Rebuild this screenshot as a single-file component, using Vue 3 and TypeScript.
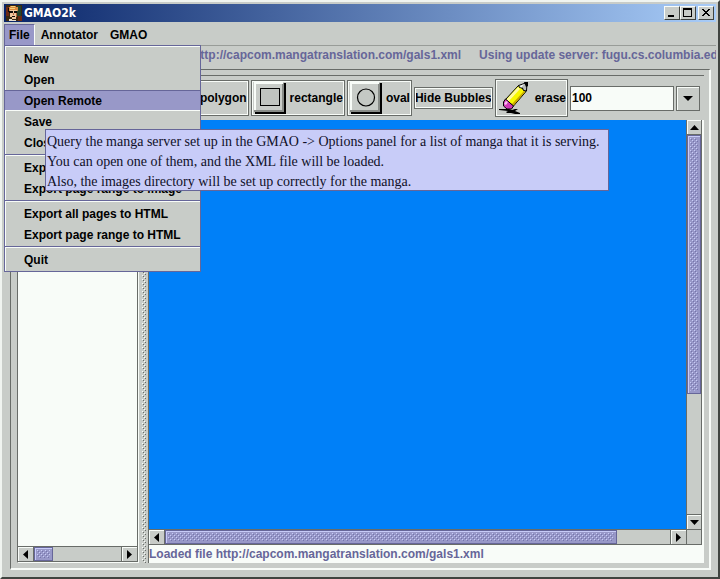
<script setup lang="ts">
import { ref } from 'vue'

interface MenuEntry {
  label: string
  selected?: boolean
}

const menus = ['File', 'Annotator', 'GMAO']
const groups: MenuEntry[][] = [
  [
    { label: 'New' },
    { label: 'Open' },
    { label: 'Open Remote', selected: true },
    { label: 'Save' },
    { label: 'Close' },
  ],
  [{ label: 'Export all pages to image' }, { label: 'Export page range to image' }],
  [{ label: 'Export all pages to HTML' }, { label: 'Export page range to HTML' }],
  [{ label: 'Quit' }],
]
const size = ref('100')
</script>

<template>
  <div class="window">
    <svg class="defs" width="0" height="0" aria-hidden="true">
      <defs>
        <pattern id="bumps" width="4" height="4" patternUnits="userSpaceOnUse">
          <path fill="#c8ccf8" d="M0 0h1v1H0zM2 2h1v1H2z" />
          <path fill="#7474ac" d="M1 1h1v1H1zM3 3h1v1H3z" />
        </pattern>
        <pattern id="grip" width="4" height="4" patternUnits="userSpaceOnUse">
          <path fill="#f8fcf8" d="M0 0h1v1H0zM2 2h1v1H2z" />
          <path fill="#686c68" d="M1 1h1v1H1zM3 3h1v1H3z" />
        </pattern>
      </defs>
    </svg>

    <header class="title">
      <svg class="avatar" width="16" height="16" viewBox="0 0 16 16" shape-rendering="crispEdges" aria-hidden="true">
        <path fill="#3a2a10" d="M0 0h16v16H0z" />
        <path fill="#24452c" d="M11 1h4v10h-4z" />
        <path fill="#6d2a12" d="M0 2h3v9H0zM12 11h4v5h-4z" />
        <path fill="#d98a3c" d="M4 1h6v1h2v4h-1V5H4v1H3V2h1z" />
        <path fill="#f4d27a" d="M5 1h4v1H5zM4 3h5v1H4z" />
        <path fill="#f0c8a0" d="M4 5h7v7h-1v2H6v-2H4z" />
        <path fill="#100c08" d="M3 6h4v2H3zM8 6h3v2H8zM6 11h3v1H6zM2 3h1v4H2z" />
        <path fill="#b86840" d="M10 8h1v4h-1zM7 8h1v2H7z" />
        <path fill="#e8e0d0" d="M3 14h3v2H3zM6 15h4v1H6z" />
      </svg>
      <h1>GMAO2k</h1>
      <button class="wb" type="button" aria-label="Minimize">
        <svg width="12" height="10" viewBox="0 0 12 10"><path d="M2 7h6v2H2z" /></svg>
      </button>
      <button class="wb" type="button" aria-label="Maximize">
        <svg width="12" height="10" viewBox="0 0 12 10"><path fill-rule="evenodd" d="M1 0h9v9H1zM2 2v6h7V2z" /></svg>
      </button>
      <button class="wb close" type="button" aria-label="Close window">
        <svg width="12" height="10" viewBox="0 0 12 10" shape-rendering="crispEdges">
          <path d="M2 1h2v1h1v1h2V2h1V1h2v1H9v1H8v1H7v1h1v1h1v1h1v1H8V7H7V6H5v1H4v1H2V7h1V6h1V5h1V4H4V3H3V2H2z" />
        </svg>
      </button>
    </header>

    <nav class="menubar">
      <button v-for="(m, i) in menus" :key="m" type="button" class="menu" :class="{ open: i === 0 }">{{ m }}</button>
      <div class="dropdown" role="menu">
        <div v-for="(g, i) in groups" :key="i" class="group">
          <button v-for="e in g" :key="e.label" type="button" role="menuitem" class="item" :class="{ selected: e.selected }">{{ e.label }}</button>
        </div>
      </div>
      <p class="tip" role="tooltip">
        Query the manga server set up in the GMAO -&gt; Options panel for a list of manga that it is serving.<br />
        You can open one of them, and the XML file will be loaded.<br />
        Also, the images directory will be set up correctly for the manga.
      </p>
    </nav>

    <div class="info">
      <span>http://capcom.mangatranslation.com/gals1.xml</span>
      <span>Using update server: fugu.cs.columbia.edu</span>
    </div>

    <main class="split">
      <section class="pages">
        <div class="list"></div>
        <div class="hbar">
          <button type="button" class="arrow" aria-label="Scroll left"><svg width="5" height="9" viewBox="0 0 10 18"><path d="M10 0v18L0 9z" /></svg></button>
          <div class="thumb small"><svg width="100%" height="100%"><rect width="100%" height="100%" fill="url(#bumps)" /></svg></div>
          <div class="track"></div>
          <button type="button" class="arrow" aria-label="Scroll right"><svg width="5" height="9" viewBox="0 0 10 18"><path d="M0 0v18L10 9z" /></svg></button>
        </div>
      </section>

      <div class="divider"><svg width="4" height="100%"><rect width="4" height="100%" fill="url(#grip)" /></svg></div>

      <section class="editor">
        <div class="toolbar">
          <button type="button" class="tool">
            <svg width="34" height="32" viewBox="0 0 34 32" aria-hidden="true">
              <path fill="#000" d="M2 1h31v31H2z" /><path fill="#888c88" d="M1 1h30v29H1z" /><path fill="#f8fcf8" d="M1 0h29v2H3v26H1z" /><path fill="#c8ccc8" d="M3 2h26v26H3z" />
              <path fill="none" stroke="#000" d="M8 10l8-4 10 7-4 11H10z" />
            </svg>polygon
          </button>
          <button type="button" class="tool">
            <svg width="34" height="32" viewBox="0 0 34 32" aria-hidden="true">
              <path fill="#000" d="M2 1h31v31H2z" /><path fill="#888c88" d="M1 1h30v29H1z" /><path fill="#f8fcf8" d="M1 0h29v2H3v26H1z" /><path fill="#c8ccc8" d="M3 2h26v26H3z" />
              <rect x="7.5" y="6.5" width="19" height="17" fill="#c0c4c0" stroke="#000" />
            </svg>rectangle
          </button>
          <button type="button" class="tool">
            <svg width="34" height="32" viewBox="0 0 34 32" aria-hidden="true">
              <path fill="#000" d="M2 1h31v31H2z" /><path fill="#888c88" d="M1 1h30v29H1z" /><path fill="#f8fcf8" d="M1 0h29v2H3v26H1z" /><path fill="#c8ccc8" d="M3 2h26v26H3z" />
              <circle cx="17" cy="15.5" r="8.5" fill="#c4c8c4" stroke="#000" stroke-width="1.2" />
            </svg>oval
          </button>
          <button type="button" class="tool plain">Hide Bubbles</button>
          <button type="button" class="tool">
            <svg width="35" height="34" viewBox="-1 0 35 34" aria-hidden="true">
              <path fill="#000" d="M1 28h10l3 1 3-1h3l-3 2 5 2v1h-5l-4-1-4 0-1-1 2-1-9-1z" />
              <path fill="#f8f800" stroke="#000" d="M20.500 4.500L28 10.500 15.500 25 7.500 18.500z" />
              <path fill="#fffca0" d="M20 6l2 2L10 21l-2-2z" />
              <path fill="#c8a800" d="M26 10l1 1-11 13-2-1z" />
              <path fill="#d038b8" stroke="#000" d="M7.500 18L15.500 25l-2 3H9l-3.500-3v-4z" />
              <path fill="#f8c0f0" d="M8 20l2 1-2 3-2-1z" />
              <path fill="#b8bcb8" stroke="#000" d="M20.500 4.500l8.500-3-.5 8.500-3-.5-1-2.500-3-.5z" />
              <path fill="#f8fcf8" d="M22 5l4-2-3 4z" /><path d="M26 1h4v4l-2 1z" />
            </svg>erase
          </button>
          <div class="combo">
            <input v-model="size" type="text" aria-label="Brush size" />
            <button type="button" aria-label="Choose size"><svg width="10" height="5" viewBox="0 0 10 5"><path d="M0 0h10L5 5z" /></svg></button>
          </div>
        </div>
        <div class="canvas"></div>
        <div class="vbar">
          <button type="button" class="arrow" aria-label="Scroll up"><svg width="9" height="5" viewBox="0 0 18 10"><path d="M0 10h18L9 0z" /></svg></button>
          <div class="thumb"><svg width="100%" height="100%"><rect width="100%" height="100%" fill="url(#bumps)" /></svg></div>
          <div class="track"></div>
          <button type="button" class="arrow" aria-label="Scroll down"><svg width="9" height="5" viewBox="0 0 18 10"><path d="M0 0h18L9 10z" /></svg></button>
        </div>
        <div class="hbar">
          <button type="button" class="arrow" aria-label="Scroll left"><svg width="5" height="9" viewBox="0 0 10 18"><path d="M10 0v18L0 9z" /></svg></button>
          <div class="thumb wide"><svg width="100%" height="100%"><rect width="100%" height="100%" fill="url(#bumps)" /></svg></div>
          <div class="track"></div>
          <button type="button" class="arrow" aria-label="Scroll right"><svg width="5" height="9" viewBox="0 0 10 18"><path d="M0 0v18L10 9z" /></svg></button>
        </div>
        <div class="corner"></div>
        <output class="status">Loaded file http://capcom.mangatranslation.com/gals1.xml</output>
      </section>
    </main>
  </div>
</template>

<style>
body {
  margin: 0;
}
</style>

<style scoped>
* {
  box-sizing: border-box;
}
.window {
  display: flex;
  flex-direction: column;
  height: 100vh;
  padding: 2px;
  border: 2px solid #404440;
  border-top-color: #f0f4f0;
  border-left-color: #f0f4f0;
  background: #c8ccc8;
  color: #000;
  font: bold 12px/16px "Liberation Sans", Arial, sans-serif;
  overflow: hidden;
}
.defs {
  position: absolute;
}
button,
input {
  margin: 0;
  padding: 0;
  border: 0;
  border-radius: 0;
  background: #c8ccc8;
  color: inherit;
  font: inherit;
}
svg {
  display: block;
  flex: none;
}
.title {
  display: flex;
  align-items: center;
  height: 18px;
  flex: none;
  padding: 0 2px;
  background: linear-gradient(90deg, #082468, #a8ccf8);
}
.title h1 {
  flex: 1;
  margin: 0;
  padding-left: 2px;
  color: #fff;
  font: bold 12px/16px "DejaVu Sans Condensed", "DejaVu Sans", sans-serif;
}
.wb {
  width: 16px;
  height: 14px;
  padding: 1px;
  border: 1px solid #404440;
  border-top-color: #f8fcf8;
  border-left-color: #f8fcf8;
}
.close {
  margin-left: 2px;
}
.menubar {
  position: relative;
  z-index: 2;
  display: flex;
  flex: none;
  height: 24px;
  padding-top: 2px;
  border-bottom: 1px solid #989c98;
}
.menu {
  padding: 0 5px;
  border: 1px solid transparent;
  border-bottom: 0;
}
.menu.open {
  padding: 0 4px;
  background: #9898c8;
  border-color: #666699;
  border-right-color: #f8fcf8;
}
.dropdown {
  position: absolute;
  top: 23px;
  left: 0;
  width: 197px;
  padding: 2px 0 1px;
  border: 1px solid #666699;
  background: #c8ccc8;
  box-shadow: inset 1px 1px #f8fcf8;
}
.group + .group {
  margin-top: 1px;
  padding-top: 2px;
  border-top: 1px solid #666699;
  box-shadow: inset 0 1px #f8fcf8;
}
.item {
  display: block;
  width: 100%;
  height: 21px;
  padding: 0 19px;
  border: 1px solid transparent;
  border-width: 1px 0;
  background: none;
  text-align: left;
  white-space: nowrap;
}
.item.selected {
  background: #9898c8;
  border-top-color: #666699;
  border-bottom-color: #f8fcf8;
}
.tip {
  position: absolute;
  top: 107px;
  left: 41px;
  margin: 0;
  padding: 2px 4px 0 1px;
  height: 62px;
  width: 564px;
  border: 1px solid #666699;
  background: #c8ccf8;
  color: #101028;
  font: 14px/20px "Liberation Serif", "Times New Roman", serif;
  white-space: nowrap;
}
.info {
  display: flex;
  flex: none;
  gap: 18px;
  height: 23px;
  padding: 1px 0 0 189px;
  color: #666699;
  white-space: nowrap;
  overflow: hidden;
}
.split {
  display: flex;
  flex: 1;
  min-height: 0;
  margin: 0 5px 5px 6px;
  padding: 5px 5px 5px 6px;
  border: 1px solid #686c68;
  border-right: 2px solid #f8fcf8;
  border-bottom: 2px solid #f8fcf8;
}
.pages {
  display: flex;
  flex-direction: column;
  width: 122px;
  border: 1px solid #686c68;
  border-right-color: #f8fcf8;
  border-bottom-color: #f8fcf8;
  background: #f8fcf8;
}
.list {
  flex: 1;
  border-right: 1px solid #686c68;
}
.divider {
  display: flex;
  justify-content: center;
  width: 9px;
}
.editor {
  display: grid;
  flex: 1;
  min-width: 0;
  grid-template: 44px 1fr 16px 18px / 1fr 16px;
  padding-right: 2px;
  border: 1px solid #686c68;
  border-right: 0;
  border-bottom: 0;
  background: #f8fcf8;
}
.toolbar {
  grid-column: 1 / -1;
  display: flex;
  align-items: center;
  justify-content: flex-end;
  gap: 2px;
  min-width: 0;
  margin-right: -2px;
  padding-right: 4px;
  background: #c8ccc8;
  overflow: hidden;
}
.tool {
  display: flex;
  flex: none;
  align-items: center;
  gap: 3px;
  padding: 1px;
  border: 1px solid #686c68;
  outline: 1px solid #f8fcf8;
  outline-offset: -2px;
  white-space: nowrap;
}
.plain {
  padding: 2px 0;
}
.combo {
  display: flex;
  flex: none;
  gap: 2px;
  height: 25px;
}
.combo input {
  width: 104px;
  padding: 0 1px;
  border: 1px solid #686c68;
  background: #f8fcf8;
}
.combo button {
  display: grid;
  place-items: center;
  width: 24px;
  border: 1px solid #686c68;
  box-shadow: inset 1px 1px #f8fcf8;
}
.canvas {
  background: #0080f8;
}
.vbar,
.hbar {
  display: flex;
  min-width: 0;
  min-height: 0;
  background: #c8ccc8;
}
.vbar {
  flex-direction: column;
  border-left: 1px solid #686c68;
  border-right: 1px solid #686c68;
}
.hbar {
  height: 16px;
  border-top: 1px solid #686c68;
  border-bottom: 1px solid #686c68;
}
.pages .hbar {
  border-right: 1px solid #686c68;
}
.arrow {
  display: grid;
  place-items: center;
  flex: none;
  width: 16px;
  border-right: 1px solid #686c68;
  box-shadow: inset 1px 1px #f8fcf8;
}
.track + .arrow {
  border-left: 1px solid #686c68;
}
.hbar .track + .arrow {
  border-right: 0;
}
.vbar .arrow {
  width: 100%;
  height: 15px;
  border: 0;
  border-bottom: 1px solid #686c68;
}
.vbar .track + .arrow {
  border-top: 1px solid #686c68;
  border-bottom: 0;
}
.thumb {
  flex: 256 1 0;
  min-width: 0;
  min-height: 0;
  padding: 2px;
  border: 1px solid #666699;
  background: #9898c8;
  box-shadow: inset 1px 1px #c8ccf8;
}
.thumb.small {
  flex: 0 0 19px;
}
.thumb.wide {
  flex: 450 1 0;
}
.track {
  flex: 1;
}
.vbar .track {
  flex: 122 1 0;
}
.wide + .track {
  flex: 54 1 0;
}
.corner {
  border: 1px solid #686c68;
  background: #c8ccc8;
}
.status {
  grid-column: 1 / -1;
  padding-top: 1px;
  color: #666699;
  white-space: nowrap;
  overflow: hidden;
}
</style>
